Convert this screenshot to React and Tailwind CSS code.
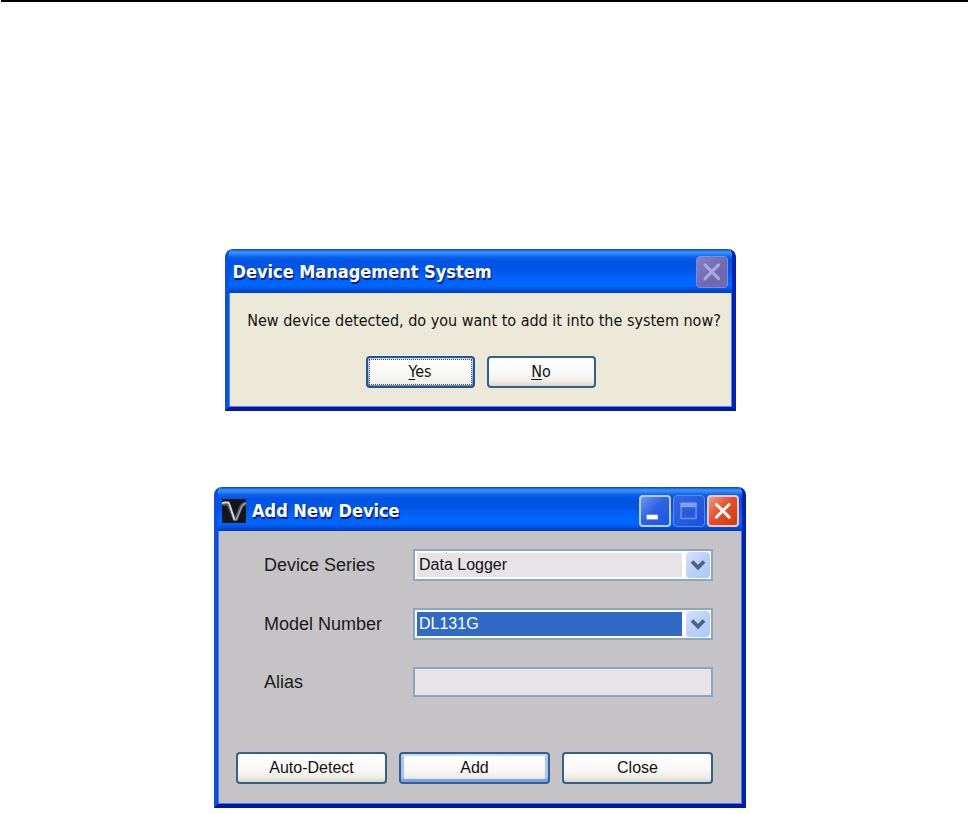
import { useState } from "react";

const titleFont =
  "font-['DejaVu_Sans_Condensed','DejaVu_Sans',sans-serif] font-bold text-white [text-shadow:1px_2px_1px_#0a1883]";
const arial = "font-['Liberation_Sans',Arial,sans-serif]";
const tahoma = "font-['DejaVu_Sans_Condensed','DejaVu_Sans',sans-serif]";

const titleBar =
  "flex items-center bg-[linear-gradient(to_bottom,#0a3fc4_0px,#3a94ff_3px,#2a85fa_5px,#0a5fec_8px,#0054e3_12px,#0055e5_20px,#0066ff_30px,#0066fe_37px,#0048d0_42px,#003dc4_44px)]";

const frame =
  "overflow-hidden rounded-t-lg border-l-4 border-r-4 border-b-4 border-l-[#0b50e4] border-r-[#0022b8] border-b-[#0018a8]";

const buttonBase =
  "h-8 rounded-[4px] border-2 border-[#2f628f] text-[#111111] bg-[linear-gradient(to_bottom,#ffffff,#f8f7f5_60%,#eeebe4_85%,#dcd5c8)]";

function CloseGlyph({ className }) {
  return (
    <svg viewBox="0 0 32 32" className={className} aria-hidden="true">
      <path d="M8.500 8.500 L23 23 M23 8.500 L8.500 23" stroke="currentColor" strokeWidth="3.400" strokeLinecap="round" />
    </svg>
  );
}

function ConfirmDialog() {
  return (
    <section className={`w-full max-w-[511px] ${frame}`} aria-label="Device Management System">
      <header className={`-mx-1 h-11 pl-2 pr-2 pt-[2px] ${titleBar}`}>
        <h1 className={`flex-1 text-[18px] leading-6 ${titleFont}`}>Device Management System</h1>
        <button
          type="button"
          aria-label="Close"
          disabled
          className="h-8 w-8 overflow-hidden rounded-[4px] border border-[#7d8ade] bg-[linear-gradient(135deg,#8580c4,#7068b0_60%,#7668ac)] text-[#a9a9dc]"
        >
          <CloseGlyph className="h-full w-full" />
        </button>
      </header>
      <div className={`flex flex-col items-center border border-t-0 border-[#4f8bf0] bg-[#ece9d8] pb-[18px] pt-4 text-[16px] ${tahoma}`}>
        <p className="whitespace-nowrap pl-2 leading-6 text-[#111111]">
          New device detected, do you want to add it into the system now?
        </p>
        <div className="mt-[23px] flex gap-3 pl-px">
          <button
            type="button"
            className="h-8 w-[109px] rounded-[4px] border-2 border-[#1d5496] bg-[linear-gradient(to_bottom,#c3dbfb,#9bb8ef_60%,#6488dd)] p-px text-[#111111]"
          >
            <span className="flex h-full w-full items-center justify-center border border-dotted border-[#5a3f58] bg-[linear-gradient(to_bottom,#ffffff,#f8f7f5_60%,#efede6)]">
              <span><span className="underline underline-offset-2">Y</span>es</span>
            </span>
          </button>
          <button type="button" className={`${buttonBase} w-[109px]`}>
            <span className="underline underline-offset-2">N</span>o
          </button>
        </div>
      </div>
    </section>
  );
}

function AppLogo() {
  return (
    <svg viewBox="0 0 24 24" className="h-6 w-6 bg-[#14161a]" aria-hidden="true">
      <path d="M0 5 L6 5 L12.500 20 L14 20 L19 8 C20 6 21 5 24 4.500" fill="none" stroke="#50555b" strokeWidth="3.400" />
      <path d="M0 4.500 L2 3.500 L6.500 3.500 L8 7 L12.500 21" fill="none" stroke="#d8dadd" strokeWidth="1.800" />
      <path d="M12.500 21 L14.500 20.500 L19.500 8 C20.500 6 21.500 5 24 4" fill="none" stroke="#9da1a6" strokeWidth="1.500" />
    </svg>
  );
}

function SelectField({ id, label, value, onChange, options, selected }) {
  return (
    <>
      <label htmlFor={id}>{label}</label>
      <div className="grid h-8 border-2 border-[#86a8c4] bg-white p-px">
        <div className="col-start-1 row-start-1 mr-[27px] flex p-px">
          <select
            id={id}
            value={value}
            onChange={onChange}
            className={`w-full appearance-none pl-0.5 text-[16px] leading-6 outline-none ${
              selected ? "bg-[#316ac5] text-white" : "bg-[#e7e3e7] text-[#111111]"
            }`}
          >
            {options.map((o) => (
              <option key={o}>{o}</option>
            ))}
          </select>
        </div>
        <span className="pointer-events-none col-start-1 row-start-1 flex w-6 items-center justify-center justify-self-end rounded-sm bg-[linear-gradient(135deg,#d6e2fd,#bdd0fb_50%,#aec8f8)]">
          <svg viewBox="0 0 16 12" className="h-3 w-4" aria-hidden="true">
            <path d="M2 2.500 L8 8.500 L14 2.500" fill="none" stroke="#4d6185" strokeWidth="3.800" />
          </svg>
        </span>
      </div>
    </>
  );
}

function AddDeviceDialog() {
  const [series, setSeries] = useState("Data Logger");
  const [model, setModel] = useState("DL131G");
  const [alias, setAlias] = useState("");

  return (
    <section className={`w-full max-w-[532px] ${frame}`} aria-label="Add New Device">
      <header className={`-mx-1 h-11 gap-[2px] pl-2 pr-[7px] pt-1 ${titleBar}`}>
        <AppLogo />
        <h2 className={`flex-1 pl-1 text-[18px] leading-6 ${titleFont}`}>Add New Device</h2>
        <button
          type="button"
          aria-label="Minimize"
          className="h-8 w-8 overflow-hidden rounded-[4px] border-2 border-[#b9cdf8] bg-[linear-gradient(135deg,#6f98f0,#2f63e4_45%,#1a55e0)]"
        >
          <svg viewBox="1 1 30 30" className="h-full w-full" aria-hidden="true">
            <rect x="7" y="20" width="12" height="5" fill="#fff" />
          </svg>
        </button>
        <button
          type="button"
          aria-label="Maximize"
          disabled
          className="h-8 w-8 overflow-hidden rounded-[4px] border border-[#5c8cf0] bg-[linear-gradient(135deg,#3468e0,#1d50dc)]"
        >
          <svg viewBox="0 0 32 32" className="h-full w-full" aria-hidden="true">
            <rect x="7.500" y="8" width="16" height="16" fill="none" stroke="#6f92ee" strokeWidth="1.500" />
            <rect x="7" y="7" width="17" height="5" fill="#829fee" />
          </svg>
        </button>
        <button
          type="button"
          aria-label="Close"
          className="h-8 w-8 overflow-hidden rounded-[4px] border-2 border-[#f0c4c0] bg-[linear-gradient(135deg,#f09a80,#e4502a_45%,#d23a08)] text-white"
        >
          <CloseGlyph className="h-full w-full" />
        </button>
      </header>
      <div className={`border border-t-0 border-[#4a7fe0] bg-[#c6c3c6] px-[17px] pb-[19px] pt-[18px] ${arial}`}>
        <div className="grid grid-cols-[149px_minmax(0,300px)] items-center gap-y-[27px] pl-7 text-[18px] leading-6 text-[#1a1a1a]">
          <SelectField
            id="series"
            label="Device Series"
            value={series}
            onChange={(e) => setSeries(e.target.value)}
            options={["Data Logger"]}
          />
          <SelectField
            id="model"
            label="Model Number"
            value={model}
            onChange={(e) => setModel(e.target.value)}
            options={["DL131G"]}
            selected
          />
          <label htmlFor="alias">Alias</label>
          <input
            id="alias"
            type="text"
            value={alias}
            onChange={(e) => setAlias(e.target.value)}
            className="h-[30px] w-full border-2 border-[#86a8c4] bg-[#e7e3e7] px-1 text-[16px] text-[#111111] outline-none"
          />
        </div>
        <div className="mt-[55px] flex gap-3 text-[16px] leading-6">
          <button type="button" className={`${buttonBase} w-[151px]`}>Auto-Detect</button>
          <button
            type="button"
            className={`${buttonBase} w-[151px] shadow-[inset_0_2px_1px_#c5dcfb,inset_0_-3px_1px_#7d9fe8,inset_3px_0_1px_#a9c1f3,inset_-3px_0_1px_#a9c1f3]`}
          >
            Add
          </button>
          <button type="button" className={`${buttonBase} w-[151px]`}>Close</button>
        </div>
      </div>
    </section>
  );
}

export default function App() {
  return (
    <main className="min-h-screen bg-white">
      <hr className="ml-px border-0 border-t-2 border-black" />
      <div className="flex flex-col items-center gap-[76px] pr-2 pt-[247px]">
        <ConfirmDialog />
        <AddDeviceDialog />
      </div>
    </main>
  );
}
